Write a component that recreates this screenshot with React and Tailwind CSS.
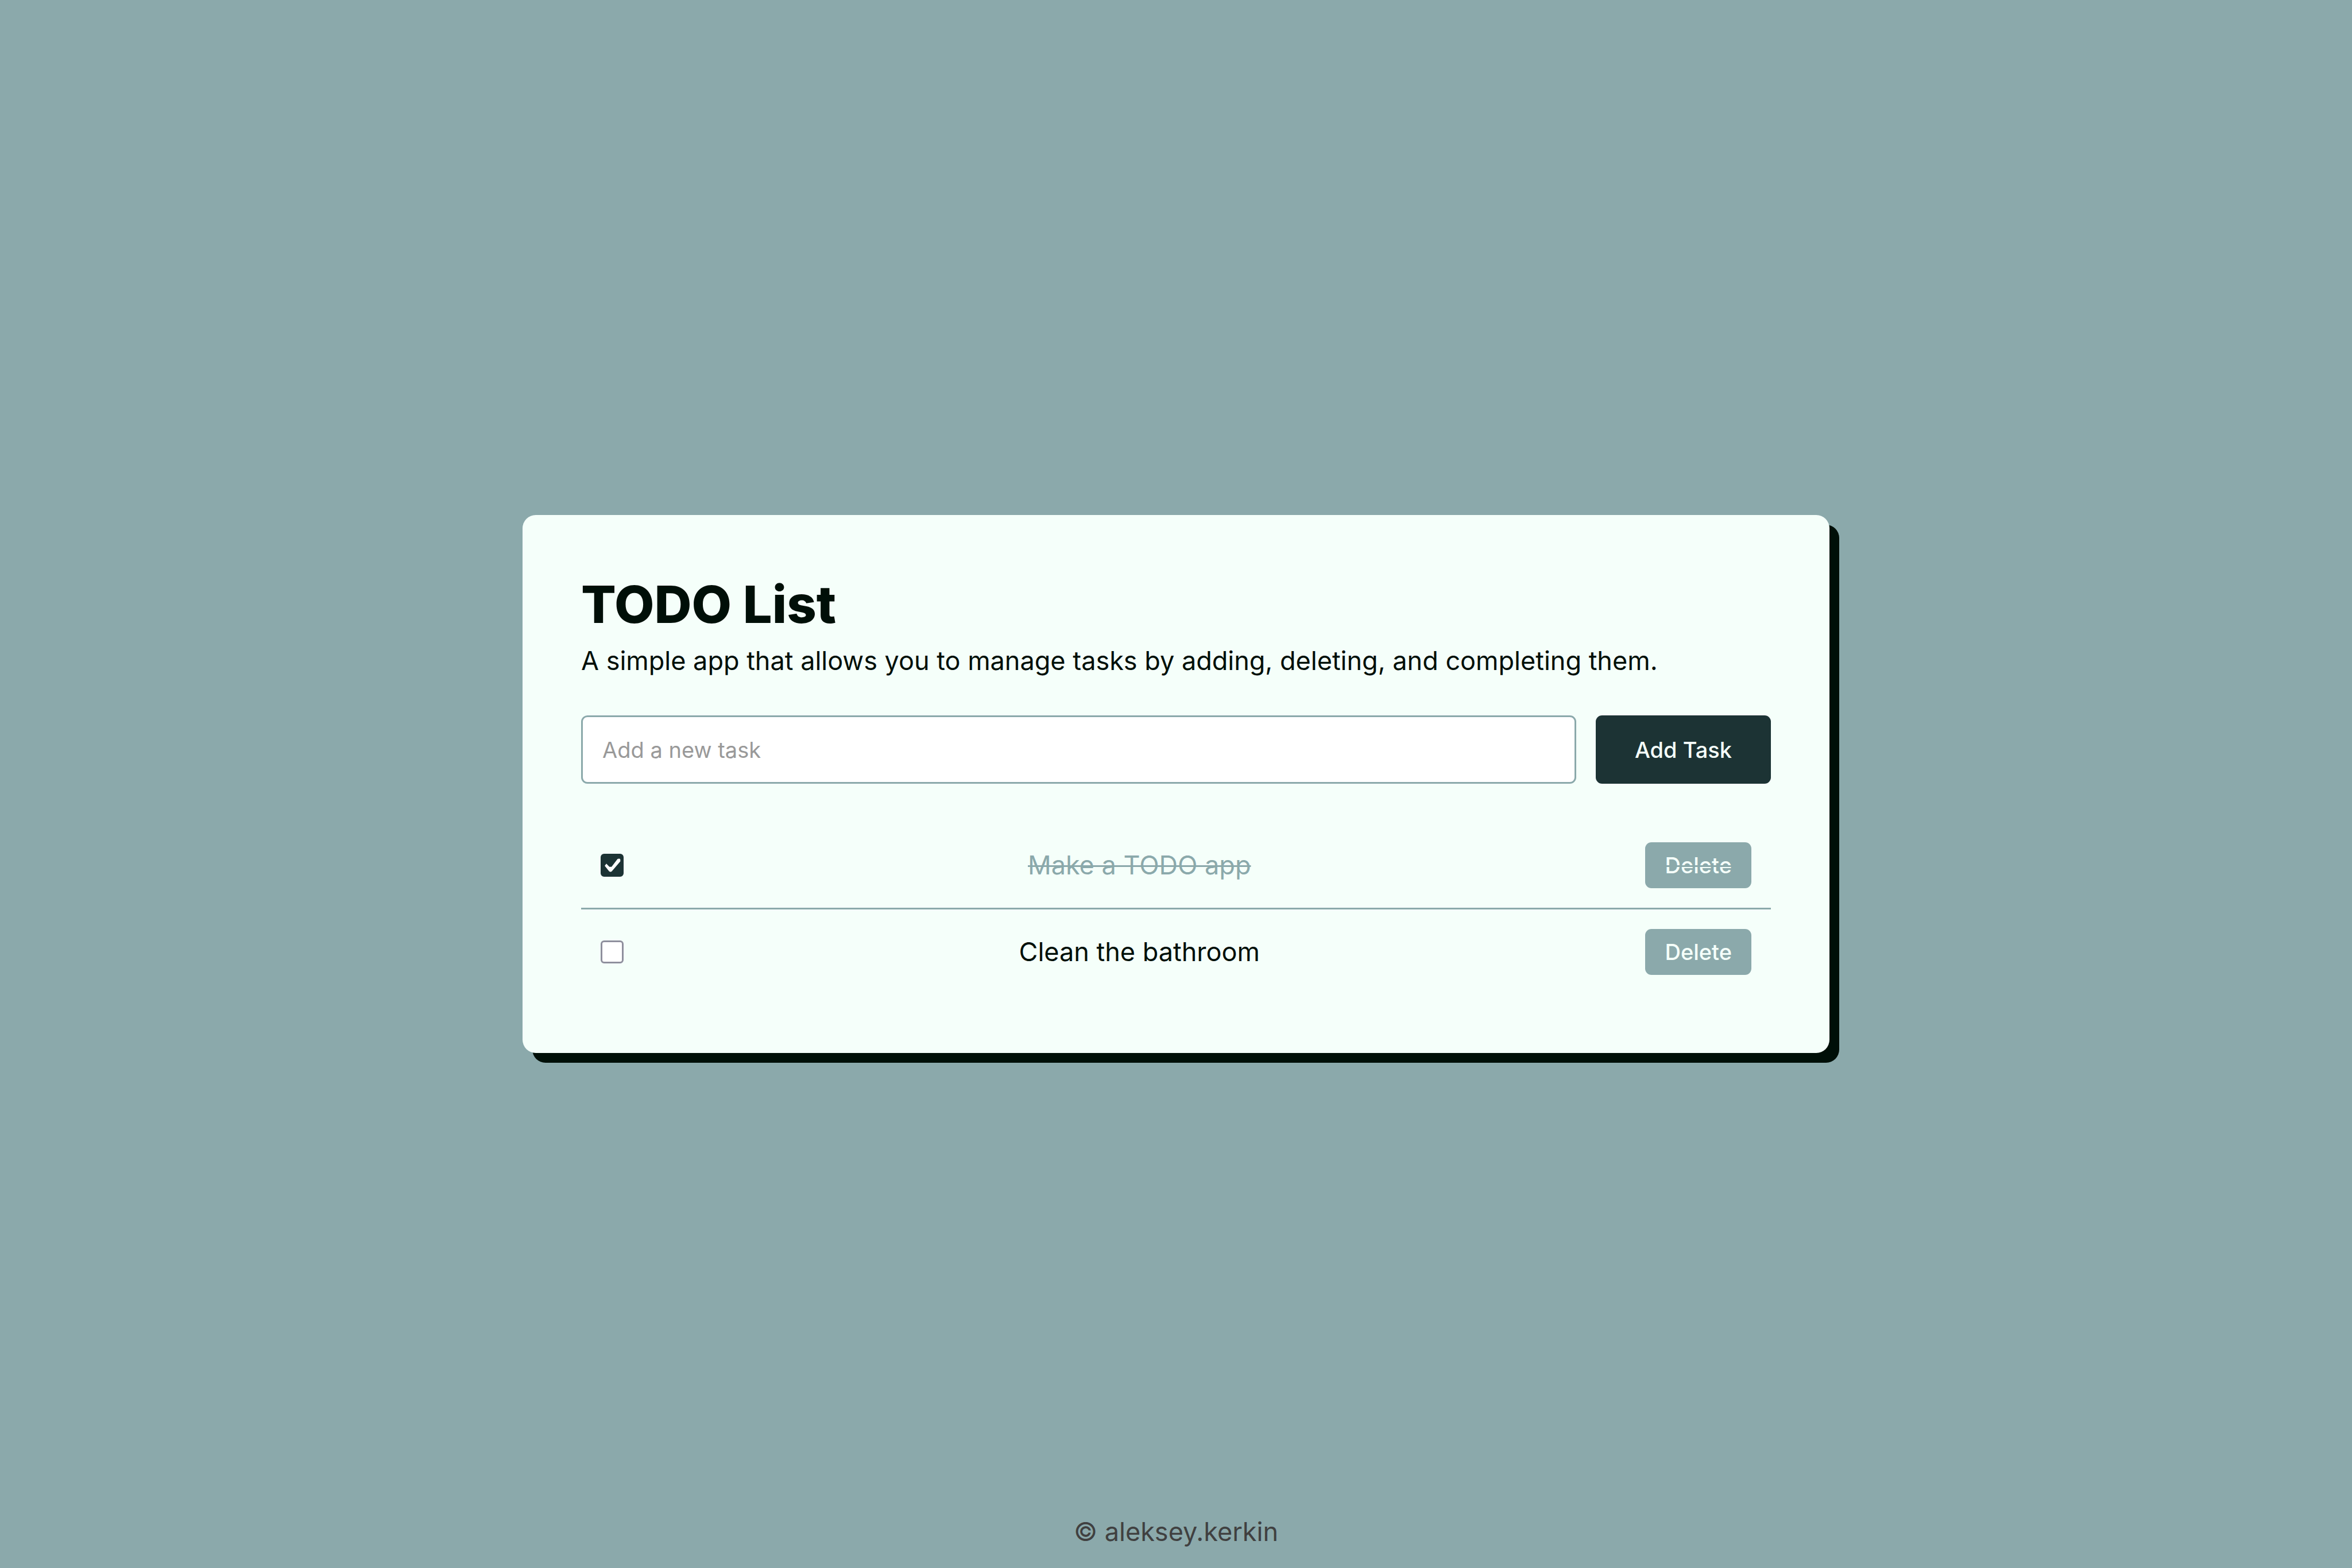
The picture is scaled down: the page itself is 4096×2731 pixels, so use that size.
import { useState } from "react";

const initialTasks = [
  { id: 1, title: "Make a TODO app", done: true },
  { id: 2, title: "Clean the bathroom", done: false },
];

function Task({ task, onToggle, onDelete }) {
  const inputId = `task-${task.id}`;
  return (
    <li className="flex items-center border-b-3 border-[#8ba9ab] p-[34px] last:border-b-0">
      <span className="mr-[17px] grid shrink-0">
        <input
          id={inputId}
          type="checkbox"
          checked={task.done}
          onChange={onToggle}
          className="peer col-start-1 row-start-1 size-10 appearance-none rounded-md border-3 border-[#8f8f9d] bg-white checked:border-[#1c3334] checked:bg-[#1c3334]"
        />
        <svg
          viewBox="0 0 42 42"
          aria-hidden="true"
          className="pointer-events-none col-start-1 row-start-1 hidden size-10 peer-checked:block"
        >
          <path
            d="M7.5 22 L10.5 18 L16 24 H20 L31 9.5 Q35 8 36 10.500 V14 L20.500 32 Q18 34 15.500 32 Z"
            fill="#ffffff"
          />
        </svg>
      </span>
      <label
        htmlFor={inputId}
        className={
          task.done
            ? "flex-1 text-center text-[#8ba9ab] line-through decoration-3"
            : "flex-1 text-center"
        }
      >
        {task.title}
      </label>
      <button
        type="button"
        onClick={onDelete}
        className="h-20 shrink-0 rounded-[11px] bg-[#8ba9ab] px-[34px] text-[38px] font-medium text-[#f5fffa]"
      >
        <span className={task.done ? "line-through decoration-[#8ba9ab] decoration-3" : ""}>
          Delete
        </span>
      </button>
    </li>
  );
}

export default function App() {
  const [tasks, setTasks] = useState(initialTasks);
  const [title, setTitle] = useState("");

  const addTask = (event) => {
    event.preventDefault();
    if (!title.trim()) return;
    setTasks([...tasks, { id: Date.now(), title: title.trim(), done: false }]);
    setTitle("");
  };

  const toggle = (id) =>
    setTasks(tasks.map((t) => (t.id === id ? { ...t, done: !t.done } : t)));

  return (
    <div className="grid min-h-screen grid-rows-[1fr_auto_1fr] justify-items-center bg-[#8ba9ab] font-['Inter',sans-serif] text-[45px] leading-[54px] text-[#000f08]">
      <main className="row-start-2 w-full max-w-[2276px] rounded-[23px] bg-[#f5fffa] p-[102px] shadow-[17px_17px_0_#000f08]">
        <h1 className="mb-[17px] text-[90px] leading-[108px] font-extrabold">TODO List</h1>
        <p>A simple app that allows you to manage tasks by adding, deleting, and completing them.</p>
        <form onSubmit={addTask} className="my-[68px] flex gap-[34px] text-[38px]">
          <input
            type="text"
            aria-label="New task"
            placeholder="Add a new task"
            value={title}
            onChange={(event) => setTitle(event.target.value)}
            className="h-[119px] min-w-0 flex-1 rounded-[11px] border-3 border-[#8ba9ab] bg-white px-[34px] placeholder:text-[#999999]"
          />
          <button
            type="submit"
            className="h-[119px] rounded-[11px] bg-[#1c3334] px-[68px] font-medium text-[#f5fffa]"
          >
            Add Task
          </button>
        </form>
        <ul>
          {tasks.map((task) => (
            <Task
              key={task.id}
              task={task}
              onToggle={() => toggle(task.id)}
              onDelete={() => setTasks(tasks.filter((t) => t.id !== task.id))}
            />
          ))}
        </ul>
      </main>
      <footer className="row-start-3 self-end pb-[36px] text-[#404040]">© aleksey.kerkin</footer>
    </div>
  );
}
